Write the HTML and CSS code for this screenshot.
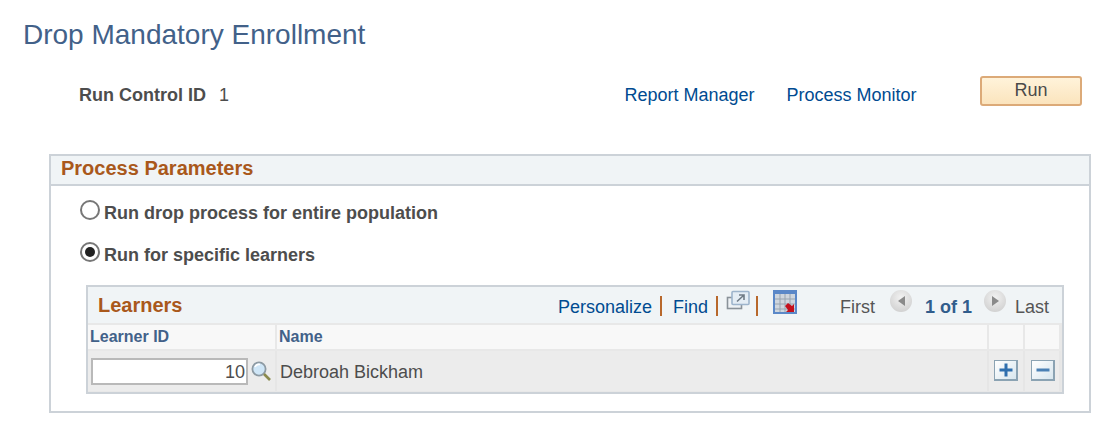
FILE: index.html
```html
<!DOCTYPE html>
<html lang="en">
<head>
<meta charset="utf-8">
<title>Drop Mandatory Enrollment</title>
<link rel="stylesheet" href="styles.css">
</head>
<body>
<h1 class="title">Drop Mandatory Enrollment</h1>
<div class="toolbar">
  <span class="rc-label">Run Control ID</span>
  <span class="rc-value">1</span>
  <a class="link report" href="#">Report Manager</a>
  <a class="link monitor" href="#">Process Monitor</a>
  <button class="run" type="button">Run</button>
</div>
<section class="panel">
  <h2 class="panel-head">Process Parameters</h2>
  <div class="radio-row row-a"><span class="radio"></span><span class="radio-label">Run drop process for entire population</span></div>
  <div class="radio-row row-b"><span class="radio on"></span><span class="radio-label">Run for specific learners</span></div>
  <div class="grid">
    <div class="grid-head">
      <span class="grid-title">Learners</span>
      <div class="grid-tools">
        <a class="link" href="#">Personalize</a><i class="bar"></i>
        <a class="link" href="#">Find</a><i class="bar"></i>
        <svg class="ico-view" width="24" height="22" viewBox="0 0 24 22"><rect x="1.5" y="7.5" width="14" height="11" fill="#eef2f5" stroke="#8a9299" stroke-width="1.6"/><rect x="6" y="1.5" width="17" height="13" rx="1" fill="#e4edf5" stroke="#9db4cc" stroke-width="1.6"/><path d="M11 11.5 17.5 5.5M13 5h5V10" fill="none" stroke="#6f7b86" stroke-width="1.6"/></svg><i class="bar short"></i>
        <svg class="ico-dl" width="24" height="24" viewBox="0 0 24 24"><rect width="24" height="24" fill="#5b88c8"/><path d="M2 4h20v18H2z" fill="#cfd6de"/><path d="M2 9h20M2 14h20M2 19h20M7 4v18M12 4v18M17 4v18" stroke="#98a4b0" stroke-width="1"/><path d="M15 13l4 3 2-2v8h-8l2-2-3-4z" fill="#c4101c"/></svg>
        <span class="pg-first">First</span>
        <span class="nav nav-prev"><span class="tri left"></span></span>
        <span class="count">1 of 1</span>
        <span class="nav nav-next"><span class="tri right"></span></span>
        <span class="pg-last">Last</span>
      </div>
    </div>
    <div class="cols">
      <div class="th">Learner ID</div>
      <div class="th">Name</div>
      <div class="th"></div>
      <div class="th"></div>
      <div class="td idcell">
        <span class="input">10</span>
        <svg class="lens" width="22" height="22" viewBox="0 0 22 22"><circle cx="9" cy="9" r="6.6" fill="#cfe6f7" stroke="#8d9aa3" stroke-width="1.8"/><path d="M5 7a4.5 4.5 0 0 1 5-2.5" stroke="#fff" stroke-width="1.6" fill="none"/><path d="M14 14l6 6" stroke="#8a8a4e" stroke-width="2.6"/></svg>
      </div>
      <div class="td name">Debroah Bickham</div>
      <div class="td btn-plus"><span class="sq"><svg width="16" height="16" viewBox="0 0 16 16"><path d="M8 1.5v13M1.5 8h13" stroke="#2f6fae" stroke-width="3"/></svg></span></div>
      <div class="td btn-minus"><span class="sq"><svg width="16" height="16" viewBox="0 0 16 16"><path d="M1.5 8h13" stroke="#4a80b4" stroke-width="3"/></svg></span></div>
    </div>
  </div>
</section>
</body>
</html>
```

FILE: styles.css
```css
* { box-sizing: border-box; }
html, body { margin: 0; padding: 0; }
body {
  width: 1120px;
  height: 444px;
  overflow: hidden;
  background: #fff;
  font-family: "Liberation Sans", Arial, sans-serif;
  color: #4d4d4d;
}
.title {
  margin: 0;
  padding: 18px 0 0 23px;
  height: 71px;
  font-size: 28px;
  line-height: 34px;
  font-weight: 400;
  color: #426189;
}
.toolbar {
  display: flex;
  align-items: center;
  height: 50px;
  padding: 0 0 2px 79px;
  font-size: 18px;
}
.rc-label { font-weight: 700; width: 140px; }
.rc-value { width: 405.5px; }
.link { color: #004b91; text-decoration: none; font-size: 18px; }
.report { width: 162px; }
.monitor { width: 193.5px; }
.run {
  width: 102px;
  height: 30px;
  margin-top: -9px;
  padding: 0;
  border: 2px solid #dcaa78;
  border-radius: 3px;
  background: linear-gradient(#fff3da, #fbe4bd);
  font: 18px "Liberation Sans", Arial, sans-serif;
  color: #4a4a4a;
}
.panel {
  margin: 33px 0 0 49px;
  width: 1042px;
  height: 259px;
  border: 2px solid #ccd2d8;
}
.panel-head {
  margin: 0;
  height: 30px;
  padding: 0 0 0 10px;
  background: #f0f4f6;
  border-bottom: 2px solid #ccd2d8;
  font-size: 20px;
  line-height: 24px;
  color: #a9581b;
}
.radio-row { display: flex; align-items: center; padding-left: 29px; font-weight: 700; font-size: 18px; height: 22px; }
.row-a { margin-top: 13px; }
.row-b { margin-top: 20px; }
.radio-label { margin-left: 4px; padding-top: 6px; }
.radio {
  width: 20px; height: 20px;
  border-radius: 50%;
  border: 2px solid #777;
  background: #fff;
  display: flex; align-items: center; justify-content: center;
}
.radio.on::after { content: ""; width: 10px; height: 10px; border-radius: 50%; background: #222; }
.grid {
  margin: 22px 0 0 35px;
  width: 978px;
  height: 109px;
  border: 2px solid #ccd2d8;
  background: #f0f4f6;
}
.grid-head {
  display: flex; align-items: center;
  height: 36px;
  padding-left: 10px;
}
.grid-title { font-size: 20px; font-weight: 700; color: #a9581b; width: 460px; margin-top: 1px; }
.grid-tools { display: flex; align-items: center; font-size: 18px; height: 36px; padding-top: 4px; }
.grid-tools > * { flex: none; }
.bar { display: block; width: 2px; height: 20px; background: #b8682c; margin: -2px 11px 0 8px; }
.bar.short { margin: -2px 0 0 6px; }
.ico-view { margin: -12px 0 0 -3px; }
.ico-dl { margin: -11px 0 0 15px; }
.pg-first { margin-left: 43px; color: #555; }
.nav {
  width: 22px; height: 22px; border-radius: 50%;
  background: radial-gradient(circle at 50% 35%, #f2f2f2, #c9c9c9);
  display: flex; align-items: center; justify-content: center;
  margin-top: -13px;
}
.nav-prev { margin-left: 15px; }
.nav-next { margin-left: 12px; }
.tri { width: 0; height: 0; border-top: 5px solid transparent; border-bottom: 5px solid transparent; }
.tri.left { border-right: 7px solid #8a8a8a; }
.tri.right { border-left: 7px solid #8a8a8a; }
.count { font-weight: 700; color: #315d8c; margin-left: 13px; }
.pg-last { margin-left: 9px; color: #555; }
.cols {
  display: grid;
  grid-template-columns: 189px 712px 36px 36px;
  grid-template-rows: 26px 40px;
  background: #e8e8e8;
  height: 69px;
  border-top: 2px solid #e8e8e8;
}
.th {
  background: #f8f8f8;
  border-right: 2px solid #e8e8e8;
  border-bottom: 2px solid #e8e8e8;
  font-size: 16px;
  font-weight: 700;
  color: #426189;
  padding-left: 2px;
  line-height: 24px;
}
.td {
  background: #ececec;
  border-right: 2px solid #e6e6e6;
  display: flex; align-items: center;
}
.idcell { padding-left: 3px; }
.input {
  width: 157px; height: 27px;
  border: 2px solid #b9b9b9;
  background: #fff;
  text-align: right;
  font-size: 18px;
  line-height: 25px;
  padding-right: 1px;
}
.lens { margin-left: 2px; }
.name { font-size: 18px; padding: 2px 0 0 3px; }
.btn-plus { padding-left: 5px; }
.btn-minus { padding-left: 6px; }
.sq {
  width: 24px; height: 21px;
  margin-top: -2px;
  border: 1px solid #8ba3b3;
  border-right-width: 2px; border-bottom-width: 2px;
  background: linear-gradient(135deg, #fff, #d8e6ee);
  display: flex; align-items: center; justify-content: center;
}
```
